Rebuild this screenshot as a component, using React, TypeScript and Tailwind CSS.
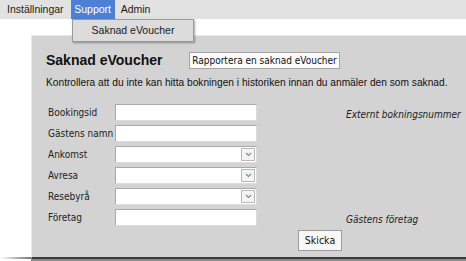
import React from "react";

const tah = { fontFamily: '"DejaVu Sans Condensed", "DejaVu Sans", sans-serif' };

function Field({ select }: { select?: boolean }) {
  return (
    <div className="relative w-[142px] h-[17px] bg-white border border-t-[#a9a9a9] border-l-[#a9a9a9] border-r-[#dcdcdc] border-b-[#dcdcdc]">
      {select && (
        <div className="absolute right-[1px] top-[1px] w-[14px] h-[13px] bg-[#f4f4f4] border border-[#b9b9b9] flex items-center justify-center">
          <svg width="7" height="5" viewBox="0 0 7 5">
            <path d="M1 1 L3.5 3.5 L6 1" fill="none" stroke="#7a8a9a" strokeWidth="1.1" />
          </svg>
        </div>
      )}
    </div>
  );
}

function Row({ label, select, note }: { label: string; select?: boolean; note?: string }) {
  return (
    <div className="flex items-center h-[21px] whitespace-nowrap">
      <div className="w-[67px] text-[10px] text-[#222]" style={tah}>{label}</div>
      <Field select={select} />
      {note && (
        <div className="ml-[89px] mt-[3px] text-[10px] italic text-[#222]" style={tah}>{note}</div>
      )}
    </div>
  );
}

export default function App() {
  return (
    <div className="relative w-[466px] h-[261px] bg-white overflow-hidden whitespace-nowrap" style={{ fontFamily: '"Liberation Sans", Arial, sans-serif' }}>
      <div className="h-[19px] bg-[#e2e2e2] flex items-stretch text-[10.5px] text-[#1a1a1a]">
        <div className="pl-[7px] pr-[7px] flex items-center">Inställningar</div>
        <div className="w-[44px] justify-center flex items-center bg-[#4d7fd4] text-white">Support</div>
        <div className="px-[6px] flex items-center">Admin</div>
      </div>
      <div className="absolute left-[72px] top-[19px] w-[122px] h-[23px] bg-[#dcdcdc] border border-[#9a9a9a] shadow-[1px_1px_2px_rgba(0,0,0,0.35)] flex items-center justify-center text-[10.5px] text-[#1a1a1a] z-10">
        Saknad eVoucher
      </div>
      <div className="pl-[31px] pt-[16px]">
        <div className="h-[224px] bg-[#d3d3d3] border-t border-l border-[#e8e8e8] border-b-2 border-b-[#3a3a3a] pl-[14px] pt-[14px]">
          <div className="flex items-center h-[21px]">
            <div className="text-[14px] font-bold text-[#111] w-[143px] leading-[21px]">Saknad eVoucher</div>
            <div className="h-[17px] w-[151px] justify-center bg-[#fafafa] border border-[#a5a5a5] text-[10px] text-[#111] flex items-center" style={tah}>
              Rapportera en saknad eVoucher
            </div>
          </div>
          <div className="mt-[4px] text-[10.2px] leading-[16px] text-[#111]">
            Kontrollera att du inte kan hitta bokningen i historiken innan du anmäler den som saknad.
          </div>
          <div className="mt-[11px] pl-[2px]">
            <Row label="Bookingsid" note="Externt bokningsnummer" />
            <Row label="Gästens namn" />
            <Row label="Ankomst" select />
            <Row label="Avresa" select />
            <Row label="Resebyrå" select />
            <Row label="Företag" note="Gästens företag" />
          </div>
          <div className="flex pl-[252px] mt-[2px]">
            <div className="h-[21px] w-[44px] justify-center bg-[#f7f7f7] border border-[#9c9c9c] text-[10.5px] text-[#111] flex items-center" style={tah}>
              Skicka
            </div>
          </div>
        </div>
      </div>
      <div className="absolute left-0 bottom-[2px] w-[31px] h-[2px] bg-gradient-to-r from-white to-[#777]" />
      <div className="absolute left-[31px] bottom-0 right-0 h-[2px] bg-[#8a8a8a]" />
    </div>
  );
}
